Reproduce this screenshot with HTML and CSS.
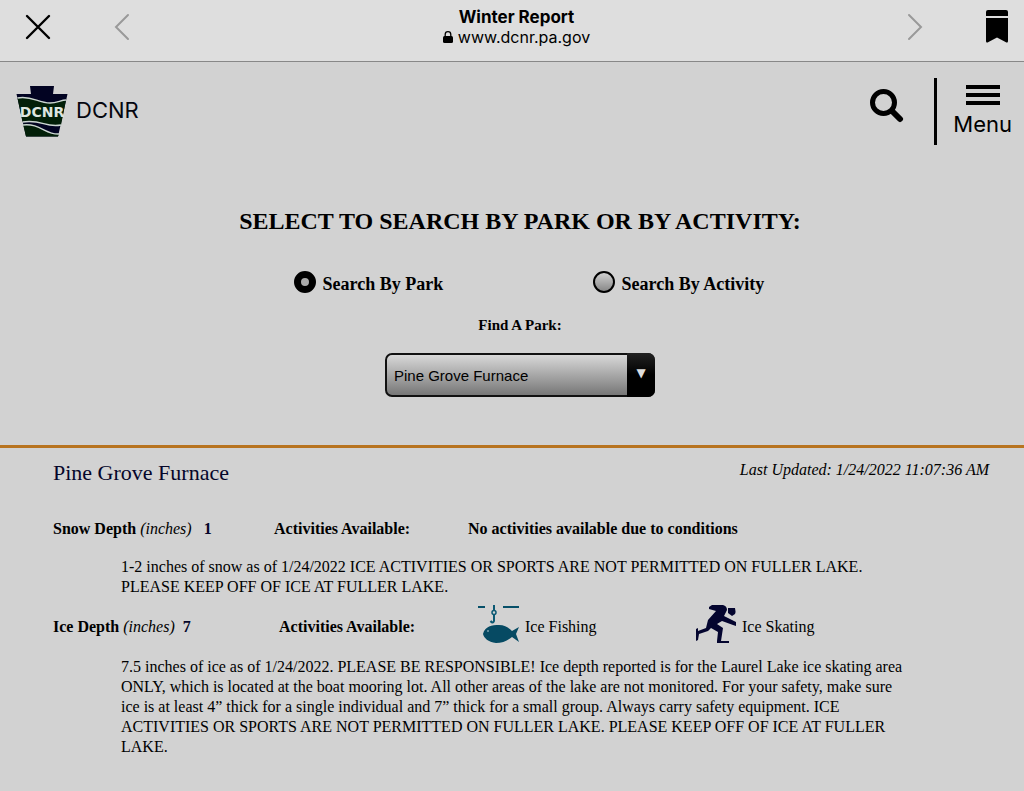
FILE: index.html
```html
<!DOCTYPE html>
<html lang="en">
<head>
    <meta charset="UTF-8">
    <meta name="viewport" content="width=device-width, initial-scale=1">
    <title>Winter Report</title>
    <link rel="stylesheet" href="styles.css">
</head>
<body>

    <div class="browser-bar">
        <div class="bar-side">
            <button type="button" class="icon-btn" aria-label="Close">
                <svg width="26" height="26" viewBox="0 0 26 26"><path d="M2 2L24 24M24 2L2 24" fill="none" stroke="#000" stroke-width="2.400" stroke-linecap="round"/></svg>
            </button>
            <button type="button" class="icon-btn" aria-label="Back">
                <svg width="16" height="28" viewBox="0 0 16 28"><path d="M14 2L2 14L14 26" fill="none" stroke="#999" stroke-width="2" stroke-linecap="round"/></svg>
            </button>
        </div>
        <div class="bar-title">
            <strong>Winter Report</strong>
            <span class="address">
                <svg width="10" height="12" viewBox="0 0 10 12"><rect x="0" y="5" width="10" height="7" rx="1.5"/><path d="M2.200 6V3.500a2.800 2.800 0 0 1 5.600 0V6" fill="none" stroke="#000" stroke-width="1.300"/></svg>
                www.dcnr.pa.gov
            </span>
        </div>
        <div class="bar-side bar-right">
            <button type="button" class="icon-btn" aria-label="Forward">
                <svg width="16" height="28" viewBox="0 0 16 28"><path d="M2 2L14 14L2 26" fill="none" stroke="#999" stroke-width="2" stroke-linecap="round"/></svg>
            </button>
            <button type="button" class="icon-btn" aria-label="Bookmark">
                <svg width="22" height="33" viewBox="0 0 22 33"><path d="M0 6V2Q0 0 2 0H20Q22 0 22 2V6Z"/><path d="M0 8H22V31Q22 33.500 19.500 32L11 27.500L2.500 32Q0 33.500 0 31Z"/></svg>
            </button>
        </div>
    </div>

    <header class="site-header">
        <a href="#" class="brand">
            <svg width="52" height="51" viewBox="0 0 52 51">
                <path d="M14 0H38L37 8H51.500L42 50.500H10L0.500 8H15Z" fill="#020322"/>
                <path d="M1.500 12C15 9 22 17 34 17C41 17 45 14 50 14L45 39C32 42 28 34 6.500 36Z" fill="#021f08"/>
                <path d="M7 38C24 36 30 49 43 48L42 50.500H10Z" fill="#021f08"/>
                <path d="M1.500 12C15 9 22 17 34 17C41 17 45 14 50 14M6.500 36C26 33 29 42 45 39M7 39C24 37 30 49 43 48" fill="none" stroke="#ccd6d2" stroke-width="1.400"/>
                <text x="26" y="31" text-anchor="middle" class="logo-text">DCNR</text>
            </svg>
            <span>DCNR</span>
        </a>
        <div class="tools">
            <button type="button" class="icon-btn search-btn" aria-label="Search">
                <svg width="34" height="34" viewBox="0 0 34 34"><circle cx="13.500" cy="13.500" r="11" fill="none" stroke="#000" stroke-width="5"/><path d="M22 22L30 30" stroke="#000" stroke-width="6" stroke-linecap="round"/></svg>
            </button>
            <button type="button" class="menu-btn">
                <svg width="34" height="21" viewBox="0 0 34 21"><path d="M0 0H34V4H0ZM0 8H34V12H0ZM0 16H34V20H0Z"/></svg>
                Menu
            </button>
        </div>
    </header>

    <form class="search">
        <h1>SELECT TO SEARCH BY PARK OR BY ACTIVITY:</h1>
        <div class="options">
            <label><input type="radio" name="mode" value="park" checked> Search By Park</label>
            <label><input type="radio" name="mode" value="activity"> Search By Activity</label>
        </div>
        <label for="park" class="find">Find A Park:</label>
        <div class="select-box">
            <select id="park">
                <option>Pine Grove Furnace</option>
            </select>
        </div>
    </form>

    <main class="report">
        <div class="report-head">
            <h2>Pine Grove Furnace</h2>
            <em>Last Updated: 1/24/2022 11:07:36 AM</em>
        </div>

        <div class="row">
            <div class="depth"><strong>Snow Depth</strong> <em>(inches)</em> <b class="value">1</b></div>
            <strong class="available">Activities Available:</strong>
            <strong>No activities available due to conditions</strong>
        </div>
        <p>1-2 inches of snow as of 1/24/2022 ICE ACTIVITIES OR SPORTS ARE NOT PERMITTED ON FULLER LAKE. PLEASE KEEP OFF OF ICE AT FULLER LAKE.</p>

        <div class="row row-ice">
            <div class="depth"><strong>Ice Depth</strong> <em>(inches)</em> <b class="value">7</b></div>
            <strong class="available">Activities Available:</strong>
            <div class="activity">
                <svg width="42" height="40" viewBox="0 0 42 40">
                    <path d="M0 3H7M25 3H41" stroke="#075069" stroke-width="2"/>
                    <path d="M16 1V6M16 11V17Q15 20 12.500 17" fill="none" stroke="#0b5973" stroke-width="2"/>
                    <circle cx="16" cy="8.500" r="2" fill="none" stroke="#0b5973" stroke-width="1.500"/>
                    <path d="M5 30C7 22 14 21 21 21C27 21 31 24 34 27L41 23L38 30L41 38L34 33C29 37 24 39 18 39C10 38 6 34 5 30Z" fill="#064a63"/>
                    <circle cx="10" cy="27" r="1" fill="#7da5b0"/>
                </svg>
                Ice Fishing
            </div>
            <div class="activity">
                <svg width="42" height="40" viewBox="0 0 42 40" fill="#04052f">
                    <path d="M17 1H28Q32 2 32 6L29 12L41 18V22L38 21L27 17L22 20L28 24L26 37H34V39H22V37L23 28L16 24L13 27L4 30L3 36L1 37V25L3 24V27L11 24L13 16L21 7L14 5V3Z"/>
                    <path d="M33 4L40 4Q41 8 40 10L37 12L33 9Z"/>
                </svg>
                Ice Skating
            </div>
        </div>
        <p>7.5 inches of ice as of 1/24/2022. PLEASE BE RESPONSIBLE! Ice depth reported is for the Laurel Lake ice skating area ONLY, which is located at the boat mooring lot. All other areas of the lake are not monitored. For your safety, make sure ice is at least 4” thick for a single individual and 7” thick for a small group. Always carry safety equipment. ICE ACTIVITIES OR SPORTS ARE NOT PERMITTED ON FULLER LAKE. PLEASE KEEP OFF OF ICE AT FULLER LAKE.</p>
    </main>

</body>
</html>
```

FILE: styles.css
```css
* {
    box-sizing: border-box;
}
body {
    margin: 0;
    background: #d2d2d2;
    color: #000;
    font: 16px/20px "Liberation Serif", serif;
}
svg {
    display: block;
    flex: none;
}
.icon-btn,
.menu-btn {
    padding: 0;
    border: 0;
    background: none;
    color: #000;
}

/* browser bar */
.browser-bar {
    display: flex;
    justify-content: space-between;
    height: 62px;
    padding: 0 16px 8px 25px;
    background: #dedede;
    border-bottom: 1px solid #888;
    font: 16px/20px Inter, sans-serif;
}
.bar-side {
    display: flex;
    flex: 1;
    align-items: center;
    gap: 63px;
}
.bar-right {
    justify-content: flex-end;
}
.bar-title {
    padding-top: 7px;
    text-align: center;
}
.bar-title strong {
    display: block;
    font-size: 17px;
    font-weight: 700;
}
.address {
    display: flex;
    align-items: center;
    justify-content: center;
    gap: 5px;
}

/* site header */
.site-header {
    display: flex;
    justify-content: space-between;
    padding: 16px 12px 0 16px;
    font: 22px/28px Inter, sans-serif;
}
.brand {
    display: flex;
    align-items: center;
    gap: 8px;
    color: #05060f;
    text-decoration: none;
}
.brand span {
    padding-bottom: 4px;
}
.logo-text {
    fill: #dde5e0;
    font: bold 14px "DejaVu Sans", sans-serif;
}
.tools {
    display: flex;
}
.search-btn {
    padding: 0 30px 12px 0;
}
.menu-btn {
    display: flex;
    flex-direction: column;
    align-items: center;
    gap: 4px;
    height: 67px;
    padding: 7px 0 0 16px;
    border-left: 3px solid #000;
    font: inherit;
}

/* search form */
.search {
    padding: 60px 0 48px 16px;
    border-bottom: 3px solid #b87420;
    text-align: center;
}
.search h1 {
    margin: 0 0 34px;
    font-size: 24px;
    line-height: 32px;
}
.options {
    display: grid;
    grid-template-columns: 299px 170px;
    justify-content: center;
    padding-left: 16px;
    font-size: 18px;
    font-weight: bold;
    line-height: 26px;
}
.options label {
    display: flex;
    align-items: center;
    gap: 7px;
    white-space: nowrap;
}
.options input {
    appearance: none;
    flex: none;
    width: 22px;
    height: 22px;
    margin: 0 0 4px;
    border: 2px solid #000;
    border-radius: 50%;
    background: linear-gradient(#d0d0d0, #888);
}
.options input:checked {
    border-width: 7px;
    background: #aaa;
}
.find {
    display: block;
    margin: 18px 0;
    font-size: 15px;
    font-weight: bold;
}
.select-box {
    position: relative;
    width: 270px;
    margin: 0 auto;
}
.select-box select {
    appearance: none;
    display: block;
    width: 100%;
    height: 44px;
    padding: 0 36px 0 7px;
    border: 2px solid #111;
    border-radius: 7px;
    background: linear-gradient(#d8d8d8, #777);
    color: #000;
    font: 15px "Liberation Sans", sans-serif;
}
.select-box::after {
    content: "▼";
    position: absolute;
    top: 0;
    right: 0;
    width: 28px;
    height: 44px;
    border-radius: 0 7px 7px 0;
    background: linear-gradient(#222, #000 50%);
    color: #ddd;
    font: 12px/40px "DejaVu Sans", sans-serif;
    pointer-events: none;
}

/* report */
.report {
    padding: 12px 35px 24px 53px;
}
.report-head {
    display: flex;
    justify-content: space-between;
}
.report h2 {
    margin: 0;
    color: #05062a;
    font-size: 22px;
    font-weight: normal;
    line-height: 26px;
}
.row {
    display: flex;
    align-items: center;
    margin: 26px 0 11px;
    line-height: 34px;
}
.depth {
    width: 221px;
}
.value {
    margin-left: 8px;
    color: #05062a;
}
.available {
    width: 194px;
}
.report p {
    margin: 0;
    padding: 0 79px 0 68px;
}
.row-ice {
    height: 60px;
    margin: 0;
}
.row-ice .depth {
    width: 226px;
}
.row-ice .value {
    margin-left: 4px;
}
.row-ice .available {
    width: 199px;
}
.activity {
    display: flex;
    align-items: center;
    gap: 5px;
    width: 217px;
}
.activity svg {
    margin-bottom: 6px;
}
```
